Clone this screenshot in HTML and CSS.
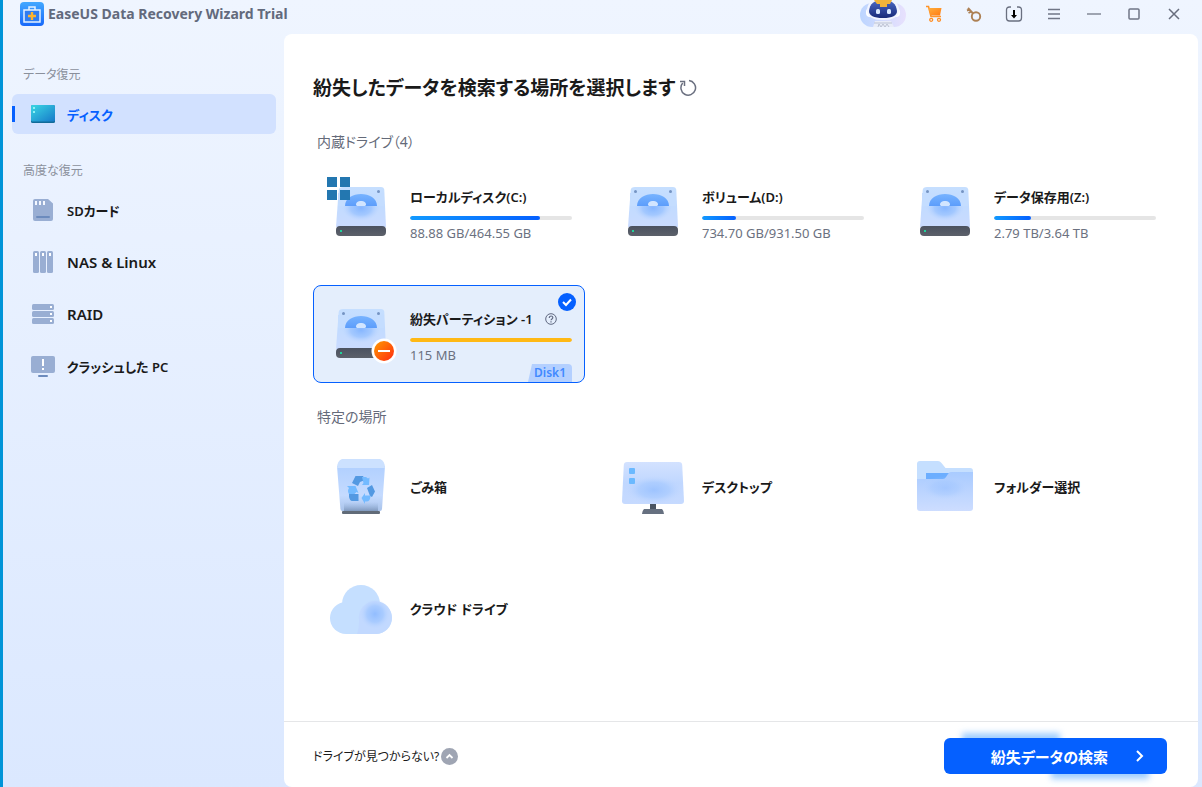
FILE: index.html
```html
<!DOCTYPE html>
<html lang="ja">
<head>
<meta charset="utf-8">
<meta name="viewport" content="width=device-width, initial-scale=1">
<title>EaseUS Data Recovery Wizard Trial</title>
<link rel="stylesheet" href="styles.css">
</head>
<body class="window">
<svg class="defs" width="0" height="0" aria-hidden="true">
  <defs>
    <linearGradient id="g-body" x1="0" y1="0" x2="0" y2="1"><stop offset="0" stop-color="#c6dfff"/><stop offset=".5" stop-color="#c2dbff"/><stop offset="1" stop-color="#cadbff"/></linearGradient>
    <linearGradient id="g-disc" x1="0" y1="0" x2="0" y2="1"><stop offset="0" stop-color="#77b3ff"/><stop offset="1" stop-color="#5c9dfb"/></linearGradient>
    <radialGradient id="g-glow"><stop offset="0" stop-color="#86b6ff"/><stop offset=".55" stop-color="#98c2ff" stop-opacity=".75"/><stop offset="1" stop-color="#bcd5ff" stop-opacity="0"/></radialGradient>
    <linearGradient id="g-base" x1="0" y1="0" x2="0" y2="1"><stop offset="0" stop-color="#4b5260"/><stop offset="1" stop-color="#5c616a"/></linearGradient>
    <linearGradient id="g-minus" x1="0" y1="0" x2="1" y2="1"><stop offset="0" stop-color="#ff9a00"/><stop offset="1" stop-color="#ff2a10"/></linearGradient>
    <linearGradient id="g-bin" x1="0" y1="0" x2="0" y2="1"><stop offset="0" stop-color="#b1d0ff"/><stop offset=".65" stop-color="#c5dbff"/><stop offset="1" stop-color="#a9c3ea"/></linearGradient>
    <linearGradient id="g-shade" x1="0" y1="0" x2="0" y2="1"><stop offset="0" stop-color="#9db8e2" stop-opacity="0"/><stop offset="1" stop-color="#8099bd"/></linearGradient>
    <linearGradient id="g-screen" x1="0" y1="0" x2="0" y2="1"><stop offset="0" stop-color="#d3e2ff"/><stop offset=".5" stop-color="#c0d7ff"/><stop offset="1" stop-color="#c6daff"/></linearGradient>
    <linearGradient id="g-front" x1="0" y1="0" x2="0" y2="1"><stop offset="0" stop-color="#a9cbff"/><stop offset="1" stop-color="#cdddff"/></linearGradient>
    <linearGradient id="g-app" x1="0" y1="0" x2="0" y2="1"><stop offset="0" stop-color="#43a8ff"/><stop offset="1" stop-color="#1768fa"/></linearGradient>
    <linearGradient id="g-disk" x1="0" y1="0" x2="1" y2="1"><stop offset="0" stop-color="#3bd7e4"/><stop offset="1" stop-color="#1679c9"/></linearGradient>
    <linearGradient id="g-cart" x1="0" y1="0" x2="1" y2="1"><stop offset="0" stop-color="#ffae3d"/><stop offset="1" stop-color="#ff7a12"/></linearGradient>
    <linearGradient id="g-pill" x1="0" y1="0" x2="1" y2="0"><stop offset="0" stop-color="#bcd5ff"/><stop offset="1" stop-color="#e8e1fd"/></linearGradient>
    <linearGradient id="g-face" x1="0" y1="0" x2="0" y2="1"><stop offset="0" stop-color="#4c69c6"/><stop offset="1" stop-color="#182a78"/></linearGradient>
    <symbol id="hdd" viewBox="0 0 70 70">
      <path d="M16 10h38q3 0 3.300 3L59 50H9l2.700-37q.3-3 4.300-3z" fill="url(#g-body)"/>
      <ellipse cx="34" cy="31" rx="19" ry="13" fill="url(#g-glow)"/>
      <path d="M11 16h46v13H11z" fill="#c4ddff"/>
      <path d="M18 29C18 21 26 17 34 17s16 4 16 12z" fill="url(#g-disc)"/>
      <path d="M29 28c0-3 2-4 5-4s5 1 5 4l-1 1h-8z" fill="#d2e5ff"/>
      <circle cx="16.500" cy="14.500" r="1.500" fill="#7594c3"/><circle cx="51.500" cy="14.500" r="1.500" fill="#7594c3"/>
      <rect x="9" y="49" width="50" height="10" rx="4" fill="url(#g-base)"/>
      <rect x="13" y="53" width="2" height="2" fill="#1fd39a"/>
    </symbol>
  </defs>
</svg>

<header class="titlebar">
  <svg class="app-icon" viewBox="0 0 24 24" aria-hidden="true"><rect width="24" height="24" rx="4" fill="url(#g-app)"/><path d="M9 8V5h6v3" fill="none" stroke="#e4f1ff" stroke-width="1.500"/><rect x="4" y="8" width="16" height="12" fill="#2f7df2" stroke="#e4f1ff" stroke-width="1.500"/><path d="M12 10v8M8 14h8" stroke="#ffb42e" stroke-width="2.400"/></svg>
  <span class="app-title">EaseUS Data Recovery Wizard Trial</span>
  <div class="tools">
    <button class="assistant" aria-label="アシスタント"><svg width="48" height="28" viewBox="0 0 48 28"><rect x="2" y="3" width="46" height="24" rx="12" fill="url(#g-pill)"/><path d="M15 27l2-6h16l3 6z" fill="#e9edf8"/><path d="M16 23h18M20 27l1-3 2 3 2-3 2 3 2-3 2 3" stroke="#bcc3d4" stroke-width="1" fill="none"/><rect x="8" y="8" width="34" height="9" rx="4" fill="#fff"/><path d="M9 10Q10-2 25-2t16 12q0 10-16 10T9 10z" fill="#f2f5ff"/><path d="M11 11Q12 0 25 0t14 11q0 7-14 7t-14-7z" fill="url(#g-face)"/><path d="M16 0h18l-2 4h-3v3h-7V4h-3z" fill="#f2b43a"/><rect x="18" y="9" width="4" height="5" rx="1.500" fill="#d9e9ff"/><rect x="29" y="9" width="4" height="5" rx="1.500" fill="#d9e9ff"/></svg></button>
    <button class="tool" aria-label="カート"><svg width="18" height="18" viewBox="0 0 18 18"><path d="M1 1.500h2.500l2.500 10h10" fill="none" stroke="#ff9429" stroke-width="1.600"/><path d="M3.500 3h13l-1.500 7.500H5.500z" fill="url(#g-cart)"/><circle cx="6.200" cy="14.800" r="1.500" fill="none" stroke="#ff8c20" stroke-width="1.300"/><circle cx="14" cy="14.800" r="1.500" fill="none" stroke="#ff8c20" stroke-width="1.300"/></svg></button>
    <button class="tool" aria-label="ライセンス"><svg width="18" height="18" viewBox="0 0 18 18" fill="none" stroke="#ad8054" stroke-width="1.900"><circle cx="11" cy="11.500" r="4.200"/><path d="M8 8.500L3 3M6.500 6.500l-3 1.500M4.500 4.500L2 5.500"/></svg></button>
    <button class="tool" aria-label="ダウンロード"><svg width="18" height="18" viewBox="0 0 18 18" fill="none"><path d="M6 2H4.500Q1.500 2 1.500 5v8q0 3 3 3h9q3 0 3-3V5q0-3-3-3H12" stroke="#6a7080" stroke-width="1.300"/><path d="M9 5v6" stroke="#000" stroke-width="2"/><path d="M6 10h6l-3 3.500z" fill="#000"/></svg></button>
    <button class="tool" aria-label="メニュー"><svg width="18" height="18" viewBox="0 0 18 18" stroke="#707686" stroke-width="1.500"><path d="M3 4.500h12M3 9h12M3 13.500h12"/></svg></button>
    <button class="tool" aria-label="最小化"><svg width="18" height="18" viewBox="0 0 18 18" stroke="#7b8190" stroke-width="1.400"><path d="M2 9h14"/></svg></button>
    <button class="tool" aria-label="最大化"><svg width="18" height="18" viewBox="0 0 18 18" fill="none" stroke="#707686" stroke-width="1.500"><rect x="4" y="4" width="10" height="10" rx="1"/></svg></button>
    <button class="tool" aria-label="閉じる"><svg width="18" height="18" viewBox="0 0 18 18" stroke="#686e7e" stroke-width="1.500"><path d="M4 4l10 10M14 4L4 14"/></svg></button>
  </div>
</header>

<div class="content">
  <nav class="sidebar">
    <h2 class="nav-label">データ復元</h2>
    <button class="nav-item nav-item-active" aria-current="page"><svg width="24" height="24" viewBox="0 0 24 24"><rect y="3" width="24" height="18" rx="1.500" fill="#126b98"/><rect y="3" width="24" height="16.500" rx="1.500" fill="url(#g-disk)"/><path d="M2 5h2v2H2zM2 9h2v2H2z" fill="#8ff1f4"/></svg>ディスク</button>
    <h2 class="nav-label">高度な復元</h2>
    <button class="nav-item"><svg width="24" height="24" viewBox="0 0 24 24"><path d="M4 1h13l5 4.500V21q0 2-2 2H4q-2 0-2-2V3q0-2 2-2z" fill="#99aed3"/><path d="M4 3h2v4H4zM8 3h2v4H8zM12 3h2v4h-2z" fill="#f4f8ff"/><rect x="5" y="18" width="14" height="2" rx="1" fill="#6c8bbd"/></svg>SDカード</button>
    <button class="nav-item nav-item-latin"><svg width="24" height="24" viewBox="0 0 24 24" fill="#99aed3"><rect x="2" y="1" width="6" height="22" rx="1.500"/><rect x="9" y="1" width="6" height="22" rx="1.500"/><rect x="16" y="1" width="6" height="22" rx="1.500"/><path d="M4 3h2v3H4zM11 3h2v3h-2zM18 3h2v3h-2z" fill="#fff"/></svg>NAS &amp; Linux</button>
    <button class="nav-item nav-item-latin"><svg width="24" height="24" viewBox="0 0 24 24" fill="#99aed3"><rect x="1" y="2" width="22" height="6" rx="1.500"/><rect x="1" y="9" width="22" height="6" rx="1.500"/><rect x="1" y="16" width="22" height="6" rx="1.500"/><path d="M19 4h2v2h-2zM19 11h2v2h-2zM19 18h2v2h-2z" fill="#fff"/></svg>RAID</button>
    <button class="nav-item"><svg width="24" height="24" viewBox="0 0 24 24"><rect y="2" width="24" height="17" rx="2" fill="#99aed3"/><path d="M11 5h2v7h-2zM11 14h2v2h-2z" fill="#fff"/><rect x="7" y="21" width="10" height="2" rx="1" fill="#6c8bbd"/></svg>クラッシュした PC</button>
  </nav>

  <main class="panel">
    <div class="panel-body">
      <div class="heading">
        <h1 class="title">紛失したデータを検索する場所を選択します</h1>
        <button class="icon-button" aria-label="更新"><svg width="18" height="18" viewBox="0 0 18 18" fill="none" stroke="#6b7080" stroke-width="1.500"><path d="M10 1.600a7.300 7.300 0 1 1-6.300 2.500"/><path d="M1 2.500h4.500v4.500"/></svg></button>
      </div>

      <h2 class="section-label">内蔵ドライブ（4）</h2>
      <div class="grid">
        <button class="card">
          <svg class="card-icon" viewBox="0 0 70 70"><use href="#hdd"/><path d="M0 0h10v10H0zM13 0h10v10H13zM0 13h10v10H0zM13 13h10v10H13z" fill="#2377b0"/></svg>
          <span class="info"><span class="name">ローカルディスク(C:)</span><span class="meter"><span class="fill" style="width:80%"></span></span><span class="size">88.88 GB/464.55 GB</span></span>
        </button>
        <button class="card">
          <svg class="card-icon" viewBox="0 0 70 70"><use href="#hdd"/></svg>
          <span class="info"><span class="name">ボリューム(D:)</span><span class="meter"><span class="fill" style="width:21%"></span></span><span class="size">734.70 GB/931.50 GB</span></span>
        </button>
        <button class="card">
          <svg class="card-icon" viewBox="0 0 70 70"><use href="#hdd"/></svg>
          <span class="info"><span class="name">データ保存用(Z:)</span><span class="meter"><span class="fill" style="width:23%"></span></span><span class="size">2.79 TB/3.64 TB</span></span>
        </button>
        <button class="card card-selected" aria-pressed="true">
          <svg class="card-icon" viewBox="0 0 70 70"><use href="#hdd"/><circle cx="57" cy="52" r="12.500" fill="#fff"/><circle cx="57" cy="52" r="10" fill="url(#g-minus)"/><path d="M51 52h12" stroke="#fff" stroke-width="2"/></svg>
          <span class="info"><span class="name">紛失パーティション -1<svg class="help" width="12" height="12" viewBox="0 0 12 12" fill="none" stroke="#5f6880"><circle cx="6" cy="6" r="5.300"/><path d="M4.200 5c0-2.600 3.600-2.600 3.600-.4C7.800 6 6 5.800 6 7.300M6 8.300v1.200" stroke-width="1.200"/></svg></span><span class="meter"><span class="fill fill-lost" style="width:100%"></span></span><span class="size">115 MB</span></span>
          <svg class="check" viewBox="0 0 18 18"><circle cx="9" cy="9" r="9" fill="#0560ff"/><path d="M5 9l3 3 5-5.500" fill="none" stroke="#fff" stroke-width="2"/></svg>
          <span class="tag">Disk1</span>
        </button>
      </div>

      <h2 class="section-label section-label-next">特定の場所</h2>
      <div class="grid">
        <button class="card">
          <svg class="card-icon" viewBox="0 0 70 70"><path d="M10 14h48l-3 43q-.2 2-2 2H15.500q-2 0-2.100-2z" fill="url(#g-bin)"/><path d="M17 50h34v9H17z" fill="url(#g-shade)"/><rect x="15" y="59" width="38" height="3" rx="1" fill="#616b78"/><path d="M15 7h38q5 2 5 9H10q0-7 5-9z" fill="#cce1ff"/>
            <path d="M25 31l3.500-7H36l2 4-5 2-2 4zM40 36l5-3 3 6.500-3 5.500-2-1zM22 42h9.500v7H25q-2 0-3-4z" fill="#5399e2"/>
            <path d="M35 25h4l2 1.500 1.500-1-.5 7.500h-7l1.500-2zM20 34h8.500l3 7-2-1-2 2H22q-2-3 0-6zM34.500 46l3.500-5v2.500h5.500q0 6-4 6H38V52z" fill="#73baff"/></svg>
          <span class="name">ごみ箱</span>
        </button>
        <button class="card">
          <svg class="card-icon" viewBox="0 0 70 70"><path d="M8 10h52q3 0 3.200 3L65 49q0 3-3 3H6q-3 0-3-3l1.800-36Q5 10 8 10z" fill="url(#g-screen)"/><ellipse cx="35" cy="38" rx="28" ry="14" fill="url(#g-glow)" opacity=".6"/><rect x="10" y="16" width="6" height="6" rx="1" fill="#6bb9ff"/><rect x="10" y="26" width="6" height="6" rx="1" fill="#6bb9ff"/><path d="M31 52h6v6h-6z" fill="#4b5563"/><path d="M25 57h18q2 2 2 5H23q0-3 2-5z" fill="#667080"/></svg>
          <span class="name">デスクトップ</span>
        </button>
        <button class="card">
          <svg class="card-icon" viewBox="0 0 70 70"><path d="M9 9h18q2 0 3.500 2l4 5H59q3 0 3 3v20H6V12q0-3 3-3z" fill="#c5dfff"/><path d="M15 21h25v10H15z" fill="#6caeff"/><path d="M6 27h26q2 0 3-2l2-3q1-2 3-2h22v36q0 3-3 3H9q-3 0-3-3z" fill="url(#g-front)"/><ellipse cx="34" cy="36" rx="24" ry="12" fill="url(#g-glow)" opacity=".4"/></svg>
          <span class="name">フォルダー選択</span>
        </button>
        <button class="card">
          <svg class="card-icon" viewBox="0 0 70 70"><circle cx="34" cy="30" r="19" fill="#c5dfff"/><rect x="3" y="28" width="62" height="32" rx="16" fill="#c5dfff"/><path d="M30 60q2-5 2-14a16.500 16.500 0 1 1 17 14z" fill="#c2d9ff"/><circle cx="48" cy="40" r="15" fill="url(#g-glow)" opacity=".8"/></svg>
          <span class="name">クラウド ドライブ</span>
        </button>
      </div>
    </div>

    <footer class="footer">
      <button class="missing">ドライブが見つからない?<svg width="17" height="17" viewBox="0 0 17 17"><circle cx="8.500" cy="8.500" r="8.500" fill="#9fa5b3"/><path d="M5.500 10l3-3 3 3" fill="none" stroke="#fff" stroke-width="1.800"/></svg></button>
      <div class="scan-wrap"><button class="scan"><span>紛失データの検索</span><svg width="10" height="14" viewBox="0 0 10 14" fill="none" stroke="#fff" stroke-width="2"><path d="M2 2l5 5-5 5"/></svg></button></div>
    </footer>
  </main>
</div>
</body>
</html>
```

FILE: styles.css
```css
*, *::before, *::after { box-sizing: border-box; }

.window {
  display: flex;
  flex-direction: column;
  min-height: 100vh;
  margin: 0;
  border-left: 3px solid #0094d8;
  background: linear-gradient(#eff5ff, #dbe8ff);
  color: #1a1a1a;
  font-family: "Noto Sans", "Noto Sans CJK JP", sans-serif;
  font-size: 13px;
  font-feature-settings: "palt";
}

.defs { position: absolute; }

button {
  padding: 0;
  border: 0;
  background: none;
  color: inherit;
  font: inherit;
  font-feature-settings: inherit;
  text-align: left;
  cursor: pointer;
}

svg { display: block; flex: none; }

/* Title bar */
.titlebar {
  display: flex;
  align-items: center;
  height: 28px;
  margin-bottom: 6px;
  padding: 0 8px 0 17px;
}
.app-icon { width: 24px; height: 24px; }
.app-title {
  margin-left: 4px;
  color: #636a7c;
  font-size: 14px;
  font-weight: 700;
  line-height: 20px;
}
.tools { display: flex; margin-left: auto; }
.assistant { width: 48px; margin-right: 8px; }
.tool {
  display: flex;
  align-items: center;
  justify-content: center;
  width: 40px;
  height: 28px;
}

.content { display: flex; flex: 1; padding-right: 4px; }

/* Sidebar */
.sidebar {
  display: flex;
  flex-direction: column;
  gap: 12px;
  flex: none;
  width: 281px;
  padding: 32px 8px 0 9px;
}
.nav-label {
  margin: 0 0 -2px 11px;
  color: #8a909c;
  font-size: 12px;
  font-weight: 400;
  line-height: 18px;
}
.nav-item + .nav-label { margin-top: 16px; }
.nav-item {
  display: flex;
  align-items: center;
  gap: 12px;
  height: 40px;
  padding-left: 19px;
  border-radius: 6px;
  font-weight: 600;
}
.nav-item-latin { font-size: 15px; }
.nav-item-active {
  position: relative;
  background: #d2e1ff;
  color: #0560ff;
}
.nav-item-active::before {
  content: "";
  position: absolute;
  left: 0;
  top: 12px;
  width: 3px;
  height: 16px;
  background: #0560ff;
}

/* Main panel */
.panel {
  display: flex;
  flex: 1;
  flex-direction: column;
  min-width: 0;
  border-radius: 8px;
  background: #fff;
}
.panel-body { flex: 1; padding: 39px 29px 24px; }
.heading { display: flex; align-items: center; gap: 4px; }
.title {
  margin: 0;
  font-size: 19px;
  font-weight: 700;
  line-height: 30px;
}
.section-label {
  margin: 29px 0 11px 4px;
  color: #646a79;
  font-size: 14px;
  font-weight: 400;
  line-height: 20px;
}
.section-label-next { margin-top: 24px; }

.grid {
  display: grid;
  grid-template-columns: repeat(3, minmax(0, 1fr));
  gap: 24px 20px;
}
.card {
  position: relative;
  display: flex;
  align-items: center;
  gap: 13px;
  min-width: 0;
  height: 98px;
  padding: 0 12px 0 13px;
  border: 1px solid transparent;
  border-radius: 8px;
}
.card-selected { border-color: #0560ff; background: #e4eefc; }
.card-icon { width: 70px; height: 70px; }
.info {
  display: flex;
  flex: 1;
  flex-direction: column;
  min-width: 0;
  padding-top: 4px;
}
.name {
  display: flex;
  align-items: center;
  gap: 12px;
  font-weight: 600;
  line-height: 20px;
  white-space: nowrap;
}
.meter {
  height: 4px;
  margin: 9px 0 4px;
  border-radius: 2px;
  background: #e5e5e5;
  overflow: hidden;
}
.fill {
  display: block;
  height: 4px;
  border-radius: 2px;
  background: linear-gradient(90deg, #129aff, #0560ff);
}
.fill-lost { background: #ffb915; }
.size { color: #6b7180; line-height: 18px; }
.check {
  position: absolute;
  top: 7px;
  right: 8px;
  width: 18px;
  height: 18px;
}
.tag {
  position: absolute;
  right: 12px;
  bottom: 0;
  width: 44px;
  background: #b4d0ff;
  border-radius: 4px 4px 0 0;
  clip-path: polygon(4px 0, 100% 0, 100% 100%, 0 100%);
  color: #4189ff;
  font-size: 12px;
  font-weight: 600;
  line-height: 18px;
  text-align: center;
}

/* Footer */
.footer {
  display: flex;
  align-items: center;
  justify-content: space-between;
  padding: 16px 31px 13px 29px;
  border-top: 1px solid #e5e6e8;
}
.missing { display: flex; align-items: center; gap: 2px; font-size: 12px; }
.scan-wrap { position: relative; isolation: isolate; }
.scan-wrap::before,
.scan-wrap::after {
  content: "";
  position: absolute;
  z-index: -1;
  width: 98px;
  height: 20px;
  background: #9fceff;
  filter: blur(3px);
}
.scan-wrap::before { top: -5px; left: 18px; }
.scan-wrap::after { right: 18px; bottom: -5px; }
.scan {
  display: flex;
  align-items: center;
  justify-content: flex-end;
  gap: 27px;
  width: 223px;
  height: 36px;
  padding-right: 22px;
  border-radius: 6px;
  background: #0560ff;
  color: #fff;
  font-size: 15px;
  font-weight: 600;
}
```
